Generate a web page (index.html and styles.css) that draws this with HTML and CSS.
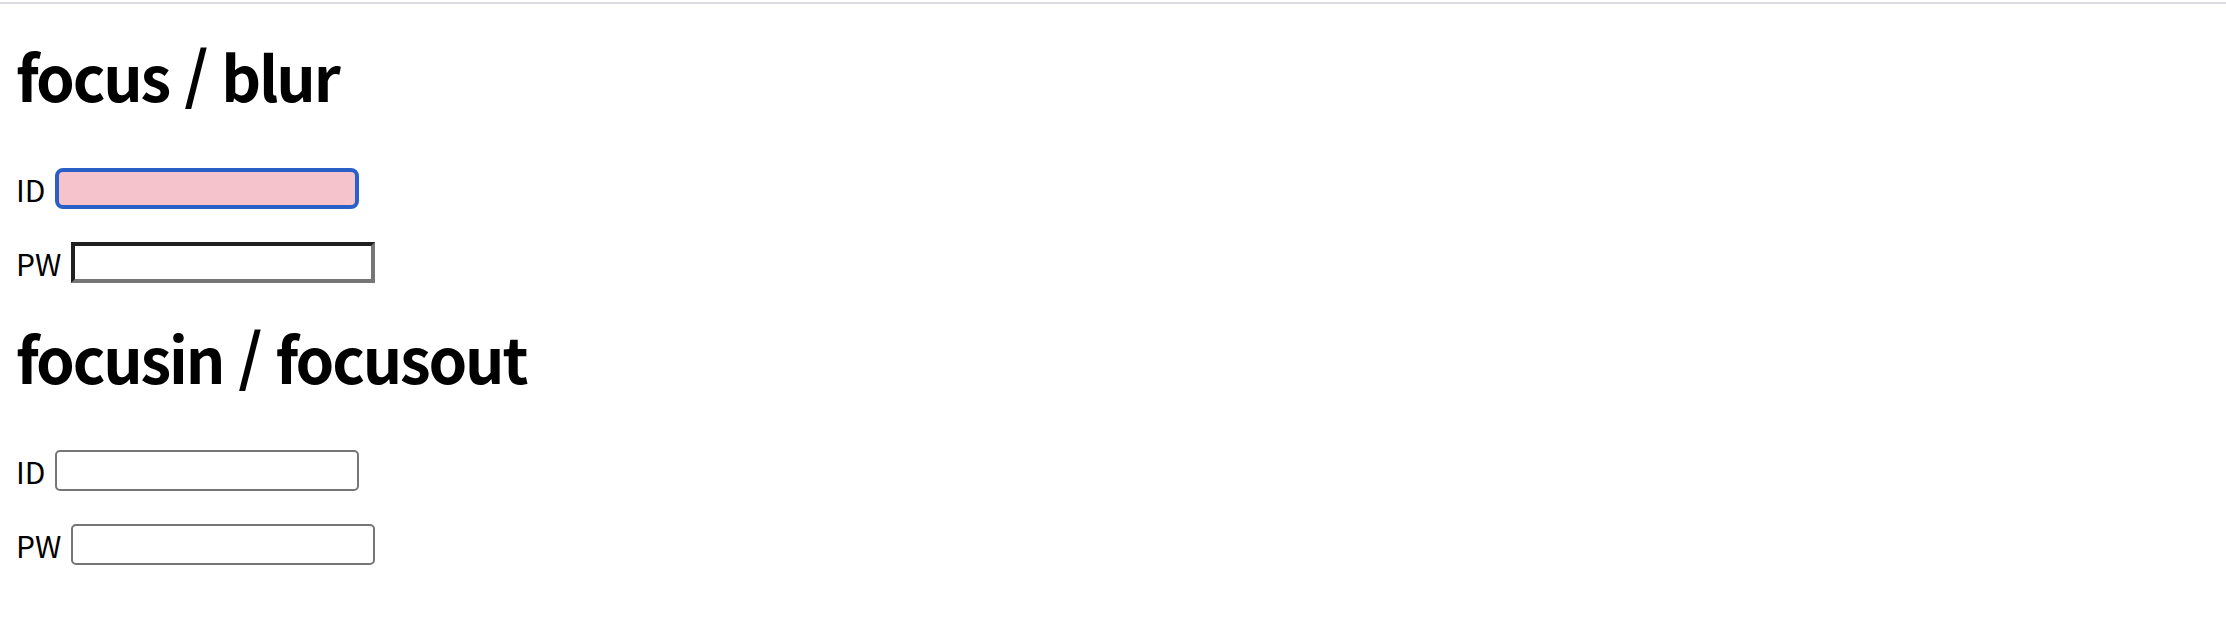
FILE: index.html
```html
<!DOCTYPE html>
<html lang="ko">
<head>
    <meta charset="UTF-8">
    <meta name="viewport" content="width=device-width, initial-scale=1.0">
    <title>focus / blur</title>
    <link rel="stylesheet" href="styles.css">
</head>
<body>
    <div class="topline"></div>

    <main class="page">
        <!-- focus / blur -->
        <section class="group">
            <h1 class="title">focus / blur</h1>
            <div class="field">
                <label for="id1">ID</label>
                <input type="text" id="id1" class="box box-focus">
            </div>
            <div class="field">
                <label for="pw1">PW</label>
                <input type="password" id="pw1" class="box box-inset">
            </div>
        </section>

        <!-- focusin / focusout -->
        <section class="group">
            <h1 class="title">focusin / focusout</h1>
            <div class="field">
                <label for="id2">ID</label>
                <input type="text" id="id2" class="box">
            </div>
            <div class="field">
                <label for="pw2">PW</label>
                <input type="password" id="pw2" class="box">
            </div>
        </section>
    </main>
</body>
</html>
```

FILE: styles.css
```css
/* 기본 */
body {
    margin: 0;
    background: #fff;
    color: #000;
    font-family: "Noto Sans CJK KR", "Noto Sans", sans-serif;
    font-size: 30px;
}

/* 상단 줄 */
.topline {
    margin-top: 2px;
    height: 2px;
    background-color: #dcdbe2;
}

.page {
    padding-left: 16px;
    display: flex;
    flex-direction: column;
    gap: 3px;
}

.group {
    display: flex;
    flex-direction: column;
    align-items: flex-start;
    gap: 33px;
}

.title {
    margin: 0 0 29px 0;
    padding-top: 40px;
    font-size: 62px;
    font-weight: bold;
    line-height: 1;
    letter-spacing: -2.2px;
}

.field {
    display: flex;
    align-items: center;
    gap: 10px;
    height: 41px;
    line-height: 1;
}

/* 입력칸 */
.box {
    box-sizing: border-box;
    width: 304px;
    height: 41px;
    margin: 0;
    padding: 0 4px;
    font-size: 26px;
    background-color: #fff;
    border: 2px solid #767676;
    border-radius: 5px;
    outline: none;
}

/* 포커스된 칸 */
.box-focus {
    background-color: #f5c3cb;
    border: 4px solid #2b5fc8;
    border-radius: 8px;
}

/* blur 후 칸 */
.box-inset {
    border-width: 4px;
    border-style: solid;
    border-color: #202020 #767676 #767676 #202020;
    border-radius: 0;
}
```
